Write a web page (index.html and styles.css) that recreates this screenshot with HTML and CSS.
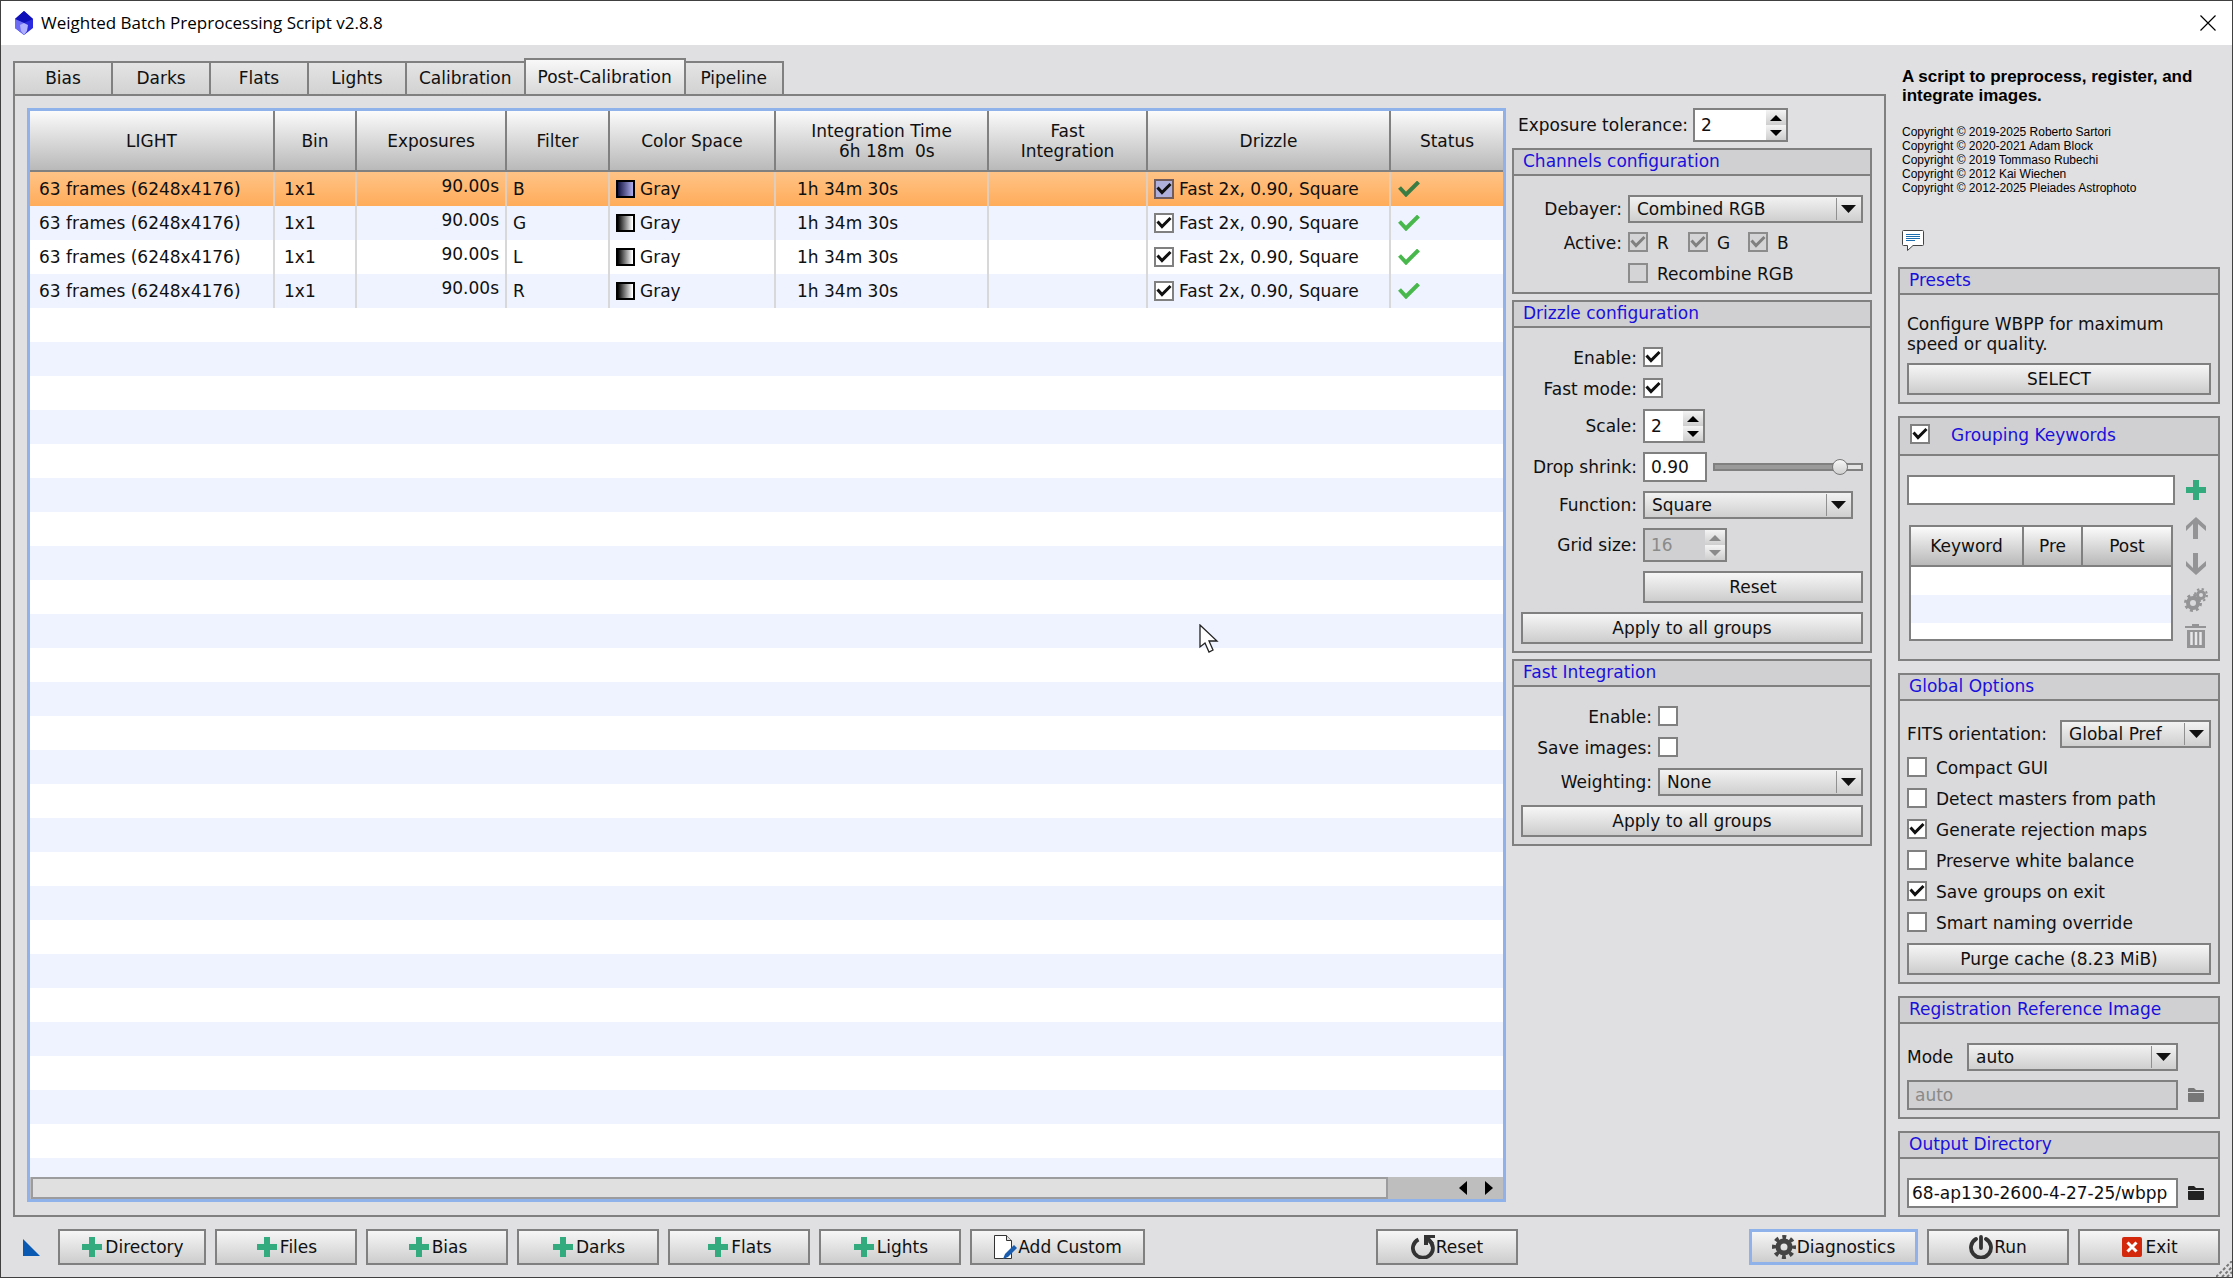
FILE: index.html
```html
<!DOCTYPE html>
<html lang="en">
<head>
<meta charset="utf-8">
<title>Weighted Batch Preprocessing Script v2.8.8</title>
<link rel="stylesheet" href="styles.css">
</head>
<body>
<svg class="defs" aria-hidden="true">
  <symbol id="plus" viewBox="0 0 24 24"><path fill="#34ab7e" d="M9 2h6v7h7v6h-7v7H9v-7H2V9h7z"/></symbol>
  <symbol id="tick" viewBox="0 0 22 16"><path fill="none" stroke="currentColor" stroke-width="4" d="M1.500 6.500l6.500 7L20.500 1"/></symbol>
  <symbol id="folder" viewBox="0 0 16 14"><path fill="currentColor" d="M0 3V1q0-1 1-1h5l2 2h7q1 0 1 1v1H0zM0 5h16v8q0 1-1 1H1q-1 0-1-1z"/></symbol>
  <symbol id="gradient" viewBox="0 0 19 18"><rect x="1" y="1" width="17" height="16" fill="url(#ramp)" stroke="#000" stroke-width="2"/></symbol>
  <linearGradient id="ramp"><stop offset=".05" stop-color="#000"/><stop offset=".9" stop-color="#fff"/></linearGradient>
  <linearGradient id="ramp-selected"><stop offset=".05" stop-color="#10103c"/><stop offset=".9" stop-color="#a8a8e8"/></linearGradient>
</svg>
<div class="window">
  <header class="titlebar">
    <svg class="app-icon" width="20" height="24" viewBox="0 0 20 24"><path fill="#2a2ae0" d="M10 0l9 8v9l-9 7-9-7V8z"/><path fill="#1010b8" d="M10 0l9 8-9 4-9-4z"/><path fill="#6c6cf4" d="M1 8l9 4v12l-9-7z"/><path fill="#b0b0ff" d="M6 14l4-2 4 2-1 6-3 4-3-4z"/></svg>
    <h1>Weighted Batch Preprocessing Script v2.8.8</h1>
    <button class="close" aria-label="Close"><svg width="16" height="16" viewBox="0 0 16 16"><path stroke="#000" stroke-width="1.200" d="M.5.5l15 15M15.500.5l-15 15"/></svg></button>
  </header>

  <div class="workspace">
    <div class="main">
      <nav class="tabs" role="tablist">
        <button role="tab">Bias</button>
        <button role="tab">Darks</button>
        <button role="tab">Flats</button>
        <button role="tab">Lights</button>
        <button role="tab">Calibration</button>
        <button role="tab" class="active" aria-selected="true">Post-Calibration</button>
        <button role="tab">Pipeline</button>
      </nav>
      <div class="page">
        <div class="frames">
          <div class="frames-body">
            <table>
              <colgroup><col class="c-light"><col class="c-bin"><col class="c-exp"><col class="c-filter"><col class="c-space"><col class="c-time"><col class="c-fast"><col class="c-drizzle"><col></colgroup>
              <thead>
                <tr><th>LIGHT</th><th>Bin</th><th>Exposures</th><th>Filter</th><th>Color Space</th><th class="pre">Integration Time
  6h 18m  0s</th><th>Fast<br>Integration</th><th>Drizzle</th><th>Status</th></tr>
              </thead>
              <tbody>
                <tr class="selected"><td>63 frames (6248x4176)</td><td>1x1</td><td class="num">90.00s</td><td class="filter">B</td><td class="space"><span class="cell"><svg width="19" height="18"><rect x="1" y="1" width="17" height="16" fill="url(#ramp-selected)" stroke="#000" stroke-width="2"/></svg>Gray</span></td><td class="time">1h 34m 30s</td><td></td><td class="drizzle"><label class="cell"><input type="checkbox" checked>Fast 2x, 0.90, Square</label></td><td class="status"><svg width="22" height="16"><use href="#tick"/></svg></td></tr>
                <tr><td>63 frames (6248x4176)</td><td>1x1</td><td class="num">90.00s</td><td class="filter">G</td><td class="space"><span class="cell"><svg width="19" height="18"><use href="#gradient"/></svg>Gray</span></td><td class="time">1h 34m 30s</td><td></td><td class="drizzle"><label class="cell"><input type="checkbox" checked>Fast 2x, 0.90, Square</label></td><td class="status"><svg width="22" height="16"><use href="#tick"/></svg></td></tr>
                <tr><td>63 frames (6248x4176)</td><td>1x1</td><td class="num">90.00s</td><td class="filter">L</td><td class="space"><span class="cell"><svg width="19" height="18"><use href="#gradient"/></svg>Gray</span></td><td class="time">1h 34m 30s</td><td></td><td class="drizzle"><label class="cell"><input type="checkbox" checked>Fast 2x, 0.90, Square</label></td><td class="status"><svg width="22" height="16"><use href="#tick"/></svg></td></tr>
                <tr><td>63 frames (6248x4176)</td><td>1x1</td><td class="num">90.00s</td><td class="filter">R</td><td class="space"><span class="cell"><svg width="19" height="18"><use href="#gradient"/></svg>Gray</span></td><td class="time">1h 34m 30s</td><td></td><td class="drizzle"><label class="cell"><input type="checkbox" checked>Fast 2x, 0.90, Square</label></td><td class="status"><svg width="22" height="16"><use href="#tick"/></svg></td></tr>
              </tbody>
            </table>
          </div>
          <div class="scrollbar">
            <div class="thumb"></div>
            <button aria-label="Scroll left"><svg width="8" height="14"><path d="M8 0v14L0 7z"/></svg></button>
            <button aria-label="Scroll right"><svg width="8" height="14"><path d="M0 0v14l8-7z"/></svg></button>
          </div>
        </div>

        <div class="settings">
          <div class="tolerance">
            <label for="tolerance">Exposure tolerance:</label>
            <div class="spin w95"><input id="tolerance" type="number" value="2"><div class="steps"><button aria-label="Increase"><svg width="12" height="6"><path d="M6 0l6 6H0z"/></svg></button><button aria-label="Decrease"><svg width="12" height="6"><path d="M0 0h12L6 6z"/></svg></button></div></div>
          </div>

          <section class="group">
            <h2>Channels configuration</h2>
            <div class="form form-a">
              <label for="debayer">Debayer:</label>
              <select id="debayer"><option>Combined RGB</option></select>
              <span class="lbl">Active:</span>
              <div class="channels">
                <label><input type="checkbox" checked disabled>R</label>
                <label><input type="checkbox" checked disabled>G</label>
                <label><input type="checkbox" checked disabled>B</label>
              </div>
              <label class="check second"><input type="checkbox" disabled>Recombine RGB</label>
            </div>
          </section>

          <section class="group">
            <h2>Drizzle configuration</h2>
            <div class="form form-b">
              <label for="dz-enable">Enable:</label><input id="dz-enable" type="checkbox" checked>
              <label for="dz-fast">Fast mode:</label><input id="dz-fast" type="checkbox" checked>
              <label for="dz-scale">Scale:</label>
              <div class="spin w62"><input id="dz-scale" type="number" value="2"><div class="steps"><button aria-label="Increase"><svg width="12" height="6"><path d="M6 0l6 6H0z"/></svg></button><button aria-label="Decrease"><svg width="12" height="6"><path d="M0 0h12L6 6z"/></svg></button></div></div>
              <label for="dz-drop">Drop shrink:</label>
              <div class="shrink"><input id="dz-drop" type="text" value="0.90"><input type="range" min="0" max="100" value="90" aria-label="Drop shrink"></div>
              <label for="dz-fn">Function:</label>
              <select id="dz-fn" class="inset"><option>Square</option></select>
              <label for="dz-grid">Grid size:</label>
              <div class="spin w84 off"><input id="dz-grid" type="number" value="16" disabled><div class="steps"><button disabled aria-label="Increase"><svg width="12" height="6"><path d="M6 0l6 6H0z"/></svg></button><button disabled aria-label="Decrease"><svg width="12" height="6"><path d="M0 0h12L6 6z"/></svg></button></div></div>
              <button class="btn second">Reset</button>
              <button class="btn wide">Apply to all groups</button>
            </div>
          </section>

          <section class="group">
            <h2>Fast Integration</h2>
            <div class="form form-c">
              <label for="fi-enable">Enable:</label><input id="fi-enable" type="checkbox">
              <label for="fi-save">Save images:</label><input id="fi-save" type="checkbox">
              <label for="fi-weight">Weighting:</label>
              <select id="fi-weight"><option>None</option></select>
              <button class="btn wide">Apply to all groups</button>
            </div>
          </section>
        </div>
      </div>
    </div>

    <aside class="side">
      <div class="about">
        <p class="lead">A script to preprocess, register, and integrate images.</p>
        <p class="copy">Copyright © 2019-2025 Roberto Sartori<br>Copyright © 2020-2021 Adam Block<br>Copyright © 2019 Tommaso Rubechi<br>Copyright © 2012 Kai Wiechen<br>Copyright © 2012-2025 Pleiades Astrophoto</p>
        <svg class="comment" width="22" height="21" viewBox="0 0 22 21"><path fill="#fff" stroke="#444" d="M1.500 .5h19q1 0 1 1v13q0 1-1 1H11l-5.500 5v-5h-4q-1 0-1-1v-13q0-1 1-1z"/><path stroke="#1a6cae" d="M4 4.500h14M4 6.500h14M4 8.500h14M4 10.500h9"/></svg>
      </div>

      <section class="group">
        <h2>Presets</h2>
        <div class="stack">
          <p>Configure WBPP for maximum speed or quality.</p>
          <button class="btn">SELECT</button>
        </div>
      </section>

      <section class="group">
        <h2 class="tall"><label><input type="checkbox" checked>Grouping Keywords</label></h2>
        <div class="keywords">
          <div class="keyword-list">
            <input type="text" aria-label="New keyword">
            <div class="keyword-table">
              <table>
                <colgroup><col class="k-name"><col class="k-pre"><col></colgroup>
                <thead><tr><th>Keyword</th><th>Pre</th><th>Post</th></tr></thead>
              </table>
            </div>
          </div>
          <div class="tools">
            <button aria-label="Add"><svg width="24" height="24"><use href="#plus"/></svg></button>
            <button aria-label="Move up"><svg width="24" height="24" viewBox="0 0 24 24"><path fill="#949496" d="M12 1l10 9v5l-8-7v15h-5V8l-7 7v-5z"/></svg></button>
            <button aria-label="Move down"><svg width="24" height="24" viewBox="0 0 24 24"><path fill="#949496" d="M12 23L2 14V9l7 7V1h5v15l8-7v5z"/></svg></button>
            <button aria-label="Options"><svg width="24" height="24" viewBox="0 0 24 24"><g fill="none" stroke="#949496"><circle cx="9" cy="15" r="5" stroke-width="4"/><circle cx="9" cy="15" r="7.500" stroke-width="3" stroke-dasharray="2.900 3"/><circle cx="17" cy="7" r="3.500" stroke-width="3"/><circle cx="17" cy="7" r="6" stroke-width="2" stroke-dasharray="2.300 2.400"/></g></svg></button>
            <button aria-label="Delete"><svg width="24" height="24" viewBox="0 0 24 24"><path fill="#949496" d="M1 2h7V0h7v2h7v2H1zM3 6h18v18H3z"/><path stroke="#e8e8ea" stroke-width="2.500" d="M7.500 8v13M12 8v13M16.500 8v13"/></svg></button>
          </div>
        </div>
      </section>

      <section class="group">
        <h2>Global Options</h2>
        <div class="stack">
          <div class="row"><label for="fits">FITS orientation:</label><select id="fits" class="fits"><option>Global Pref</option></select></div>
          <label class="check"><input type="checkbox">Compact GUI</label>
          <label class="check"><input type="checkbox">Detect masters from path</label>
          <label class="check"><input type="checkbox" checked>Generate rejection maps</label>
          <label class="check"><input type="checkbox">Preserve white balance</label>
          <label class="check"><input type="checkbox" checked>Save groups on exit</label>
          <label class="check"><input type="checkbox">Smart naming override</label>
          <button class="btn">Purge cache (8.23 MiB)</button>
        </div>
      </section>

      <section class="group">
        <h2>Registration Reference Image</h2>
        <div class="stack">
          <div class="row mode"><label for="mode">Mode</label><select id="mode"><option>auto</option></select></div>
          <div class="row file"><input type="text" value="auto" disabled aria-label="Reference image"><button class="browse" disabled aria-label="Browse"><svg width="16" height="14"><use href="#folder"/></svg></button></div>
        </div>
      </section>

      <section class="group">
        <h2>Output Directory</h2>
        <div class="stack">
          <div class="row file"><input class="path" type="text" value="68-ap130-2600-4-27-25/wbpp" aria-label="Output directory"><button class="browse" aria-label="Browse"><svg width="16" height="14"><use href="#folder"/></svg></button></div>
        </div>
      </section>
    </aside>
  </div>

  <footer class="actions">
    <button class="instance" aria-label="New instance"><svg width="17" height="17"><path fill="#0a5ab4" d="M0 0l17 17H0z"/></svg></button>
    <button class="btn w148"><svg width="24" height="24"><use href="#plus"/></svg>Directory</button>
    <button class="btn"><svg width="24" height="24"><use href="#plus"/></svg>Files</button>
    <button class="btn"><svg width="24" height="24"><use href="#plus"/></svg>Bias</button>
    <button class="btn"><svg width="24" height="24"><use href="#plus"/></svg>Darks</button>
    <button class="btn"><svg width="24" height="24"><use href="#plus"/></svg>Flats</button>
    <button class="btn"><svg width="24" height="24"><use href="#plus"/></svg>Lights</button>
    <button class="btn w175"><svg width="24" height="24" viewBox="0 0 24 24"><path fill="#fff" stroke="#333" d="M1.500 .5h12l5 5v18h-17z"/><path fill="#ddd" stroke="#333" d="M13.500 .5v5h5"/><path fill="#1a5cae" d="M21 10l3 3-9 9-5 2 2-5z"/></svg>Add Custom</button>
    <button class="btn reset"><svg width="24" height="24" viewBox="0 0 24 24"><path fill="none" stroke="#333" stroke-width="3.800" d="M7.500 4.500a10 9.600 0 1 0 10.500 1"/><path fill="#333" d="M13 0h11v3h-5l4 5-3 2-3-4v4h-4z"/></svg>Reset</button>
    <button class="btn w169 focused"><svg width="24" height="24" viewBox="0 0 24 24"><g fill="none" stroke="#444"><circle cx="12" cy="12" r="6" stroke-width="5"/><circle cx="12" cy="12" r="10" stroke-width="4" stroke-dasharray="3.900 3.950" stroke-dashoffset="1.950"/></g></svg>Diagnostics</button>
    <button class="btn"><svg width="24" height="24" viewBox="0 0 24 24"><path fill="none" stroke="#333" stroke-width="3.800" stroke-linecap="round" d="M12 2v11M7 4a10 10 0 1 0 10 0"/></svg>Run</button>
    <button class="btn"><svg width="24" height="24" viewBox="0 0 24 24"><rect x="2" y="2" width="20" height="20" rx="2" fill="#d4280c"/><path stroke="#fff" stroke-width="3" d="M7.500 7.500l9 9M16.500 7.500l-9 9"/></svg>Exit</button>
  </footer>

  <svg class="grip" width="16" height="16" viewBox="0 0 16 16"><path stroke="#777" stroke-width="2" stroke-dasharray="3 2" d="M0 16L16 0M6 16L16 6M11 16l5-5"/></svg>
  <svg class="cursor" width="20" height="30" viewBox="0 0 20 30"><path fill="#fff" stroke="#222" stroke-width="1.300" d="M1 1v22l5-4 4 9 4-2-4-9h8z"/></svg>
</div>
</body>
</html>
```
FILE: styles.css
```css
* { box-sizing: border-box; }
body {
  margin: 0;
  font: 17px/20px "DejaVu Sans", sans-serif;
  color: #101010;
  background: #e0e0e2;
}
h1, h2, p { margin: 0; font-weight: normal; }
button, input, select { font: inherit; color: inherit; margin: 0; border-radius: 0; }
button { padding: 0; border: 0; background: none; }
svg { display: block; flex: none; }
.defs { position: absolute; width: 0; height: 0; }

.window {
  position: relative;
  min-height: 100vh;
  display: flex;
  flex-direction: column;
  border: 1px solid #404040;
}
.titlebar {
  display: flex;
  align-items: center;
  gap: 7px;
  height: 44px;
  padding: 0 16px 0 13px;
  background: #fff;
}
.titlebar h1 { font: 17px/24px "Open Sans", sans-serif; color: #000; }
.close { margin-left: auto; }

.workspace {
  flex: 1;
  display: flex;
  gap: 12px;
  padding: 13px 12px 12px;
}
.main { flex: 1; min-width: 0; display: flex; flex-direction: column; }

.tabs { display: flex; align-items: flex-end; }
.tabs button {
  min-width: 98px;
  height: 33px;
  padding: 0 12px 2px;
  border: 2px solid #808080;
  border-width: 2px 0 0 2px;
  background: linear-gradient(#e4e4e5, #d2d2d3);
}
.tabs .active { height: 36px; padding-bottom: 0; border-right-width: 2px; background: linear-gradient(#f8f8f8, #d8d8d9); }
.tabs .active + button { border-left: 0; border-right-width: 2px; }

.page {
  flex: 1;
  display: flex;
  gap: 6px;
  padding: 12px 12px 13px;
  border: 2px solid #808080;
}
.frames {
  flex: 1;
  min-width: 0;
  display: flex;
  flex-direction: column;
  border: 3px solid #8fb2ea;
  background: #fff;
}
.frames-body {
  flex: 1;
  background: repeating-linear-gradient(#fff 0 34px, #eff3ff 34px 68px) 0 61px no-repeat;
}
table { width: 100%; border-collapse: separate; border-spacing: 0; table-layout: fixed; }
th, td { padding: 0; font-weight: normal; }
th {
  border: 2px solid #808080;
  border-width: 0 2px 2px 0;
  background: linear-gradient(#fbfbfb, #e0e0e0 40%, #b9b9b9);
}
th:last-child { border-right: 0; }
.pre { white-space: pre; }
.frames th { height: 61px; }
.frames td { height: 34px; padding-left: 9px; border-right: 2px solid #d8d8d8; white-space: nowrap; }
.frames td:last-child { border-right: 0; }
.frames .num { padding: 0 6px 6px 0; text-align: right; }
.frames .filter,
.frames .space,
.frames .drizzle { padding-left: 6px; }
.frames .time { padding-left: 21px; }
.frames .status { padding-left: 7px; color: #48b84c; }
.selected { background: linear-gradient(#ffc386, #ffac5a); }
.frames .selected .status { color: #3a7d44; }
.selected td { border-color: #e0cdbb; }
.cell { display: flex; align-items: center; gap: 5px; }
.c-light { width: 245px; }
.c-bin { width: 82px; }
.c-exp { width: 150px; }
.c-filter { width: 103px; }
.c-space { width: 166px; }
.c-time { width: 213px; }
.c-fast { width: 159px; }
.c-drizzle { width: 243px; }

.scrollbar {
  display: flex;
  align-items: center;
  gap: 18px;
  height: 22px;
  padding-right: 10px;
  background: #bebebe;
}
.thumb { flex: 1; height: 22px; margin: 0 53px 0 1px; border: 2px solid #9c9c9e; background: #e0e0e0; }

.settings { width: 360px; display: flex; flex-direction: column; gap: 6px; }
.tolerance { display: flex; align-items: center; gap: 5px; padding-left: 6px; }

.group { border: 2px solid #808080; background: #dadadc; }
.group h2 {
  padding: 0 9px 2px;
  border-bottom: 2px solid #808080;
  background: #d0d0d2;
  font-size: 17px;
  line-height: 22px;
  color: #1a10dc;
}
.group h2.tall { padding: 6px 10px 8px; }
.tall label { display: flex; gap: 21px; }

.form { display: grid; gap: 9px 6px; padding: 19px 7px 7px; align-items: center; line-height: 22px; }
.form-a { grid-template-columns: 101px 1fr; }
.form-b { grid-template-columns: 116px 1fr; }
.form-c { grid-template-columns: 131px 1fr; }
.form > label:not(.check), .lbl { text-align: right; white-space: nowrap; }
.form > input[type=checkbox] { align-self: start; }
.second { grid-column: 2; }
.wide { grid-column: 1 / -1; }
.inset { margin-right: 10px; }
.channels { display: flex; }
.channels label { display: flex; gap: 9px; width: 60px; }
.check { display: flex; gap: 9px; line-height: 22px; }
.shrink { display: flex; align-items: center; gap: 6px; }
.shrink input[type=text] { width: 64px; }

input[type=checkbox] {
  appearance: none;
  flex: none;
  width: 20px;
  height: 20px;
  border: 2px solid #808080;
  background: #fff center / 16px 16px no-repeat;
}
input[type=checkbox]:checked {
  background-image: url("data:image/svg+xml,%3Csvg xmlns='http://www.w3.org/2000/svg' viewBox='0 0 16 16'%3E%3Cpath fill='none' stroke='%23101010' stroke-width='3' d='M1.500 6.500l4.500 5 8.500-8.500'/%3E%3C/svg%3E");
}
input[type=checkbox]:disabled { background-color: #d4d4d6; border-color: #8c8c8c; }
input[type=checkbox]:disabled:checked {
  background-image: url("data:image/svg+xml,%3Csvg xmlns='http://www.w3.org/2000/svg' viewBox='0 0 16 16'%3E%3Cpath fill='none' stroke='%23808080' stroke-width='3' d='M1.500 6.500l4.500 5 8.500-8.500'/%3E%3C/svg%3E");
}
.selected input[type=checkbox] { background-color: #b0b0dc; border-color: #705c5c; }

input[type=text] { min-width: 0; height: 30px; padding: 0 6px; border: 2px solid #808080; background: #fff; }
input[type=text]:disabled { background: #d0d0d2; color: #8a8a8a; }
input.path { padding: 0 3px; }

select {
  appearance: none;
  height: 28px;
  min-width: 0;
  padding: 0 26px 0 7px;
  border: 2px solid #808080;
  background:
    url("data:image/svg+xml,%3Csvg xmlns='http://www.w3.org/2000/svg' width='25' height='24'%3E%3Cpath stroke='%23909090' d='M.5 1v22'/%3E%3Cpath fill='%23101010' d='M5 8h15l-7.500 8z'/%3E%3C/svg%3E") right center no-repeat,
    linear-gradient(#f2f2f2, #cfcfcf);
}

.spin { display: flex; height: 34px; border: 2px solid #808080; background: #fff; }
.spin input { flex: 1; min-width: 0; padding: 0 6px; border: 0; background: none; appearance: textfield; }
.spin input::-webkit-inner-spin-button { display: none; }
.steps { width: 20px; display: flex; flex-direction: column; }
.steps button { flex: 1; display: flex; align-items: center; justify-content: center; background: linear-gradient(#f4f4f4, #cecece); }
.off { background: #d0d0d2; color: #8a8a8a; }
.off svg { fill: #8a8a8a; }
.w95 { width: 95px; }
.w62 { width: 62px; }
.w84 { width: 84px; }

input[type=range] { appearance: none; flex: 1; min-width: 0; height: 16px; background: none; }
input[type=range]::-webkit-slider-runnable-track {
  height: 8px;
  border: 2px solid #808080;
  background: linear-gradient(90deg, #9a9a9a 88%, #e4e4e4 88%);
}
input[type=range]::-webkit-slider-thumb {
  appearance: none;
  width: 16px;
  height: 16px;
  margin-top: -6px;
  border: 1px solid #777;
  border-radius: 50%;
  background: linear-gradient(#f6f6f6, #d0d0d0);
}

.btn {
  display: flex;
  align-items: center;
  justify-content: center;
  gap: 1px;
  height: 32px;
  border: 2px solid #808080;
  background: linear-gradient(#f6f6f6, #cdcdcd);
}

.side { width: 322px; display: flex; flex-direction: column; gap: 12px; }
.about { padding: 9px 4px 4px; font-family: "Liberation Sans", sans-serif; color: #000; }
.lead { margin-bottom: 20px; font-size: 17px; line-height: 19px; font-weight: bold; }
.copy { font-size: 12px; line-height: 14px; }
.comment { margin-top: 35px; }

.stack { display: flex; flex-direction: column; gap: 9px; padding: 19px 7px 7px; }
.row { display: flex; align-items: center; justify-content: space-between; }
.fits { width: 151px; }
.mode select { width: 211px; }
.mode { padding-right: 33px; }
.file input { flex: 1; }
.browse { width: 33px; display: flex; justify-content: center; padding-left: 3px; color: #222; }
.browse:disabled { color: #777; }

.keywords { display: flex; padding: 19px 7px 8px; }
.keyword-list { flex: 1; display: flex; flex-direction: column; gap: 20px; padding-bottom: 10px; }
.keyword-table {
  height: 116px;
  margin: 0 2px;
  border: 2px solid #808080;
  background: linear-gradient(#fff 68px, #eff3ff 68px 96px, #fff 96px);
}
.keyword-table th { height: 40px; }
.k-name { width: 113px; }
.k-pre { width: 59px; }
.tools { width: 36px; display: flex; flex-direction: column; align-items: center; gap: 12px; padding: 3px 0 0 6px; }
.tools button:first-child { margin-bottom: 2px; }

.actions { display: flex; align-items: center; gap: 9px; padding: 0 12px 12px; }
.actions .btn { width: 142px; height: 36px; }
.actions .w148 { width: 148px; }
.actions .w175 { width: 175px; }
.actions .w169 { width: 169px; }
.actions .focused { border: 3px solid #8fb2ea; }
.actions .reset { margin: 0 auto; }
.instance { width: 36px; padding-left: 10px; }

.grip { position: absolute; right: 0; bottom: 0; }
.cursor { position: absolute; left: 1198px; top: 623px; }
```
